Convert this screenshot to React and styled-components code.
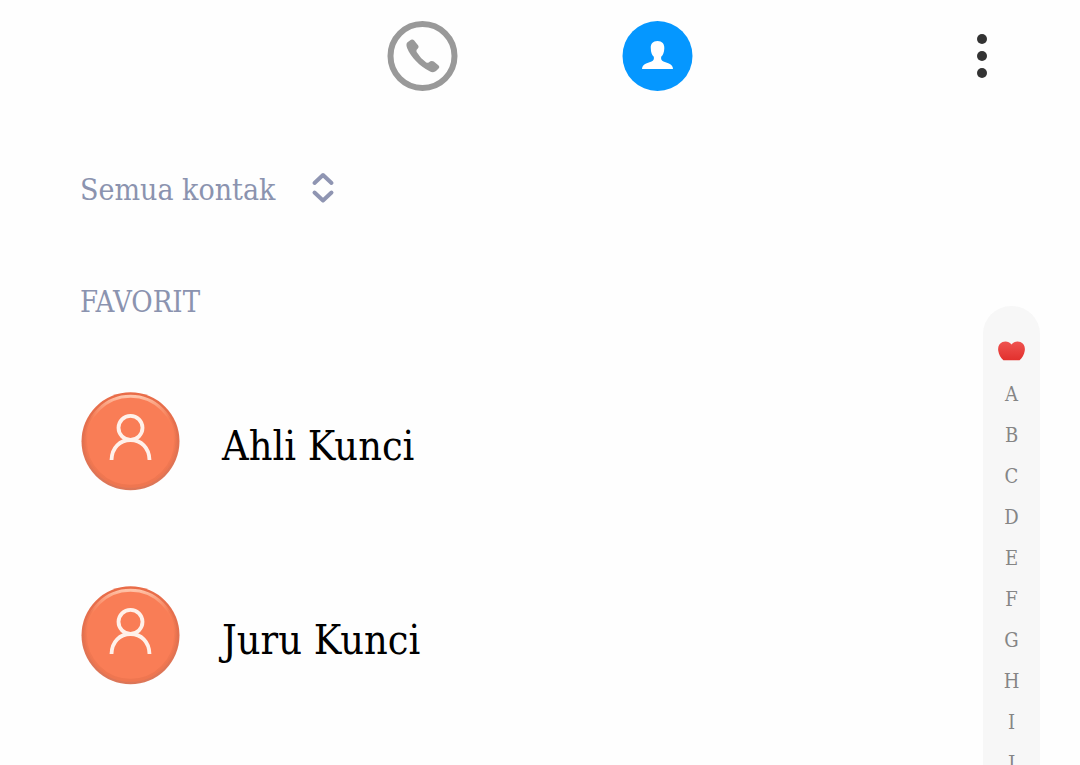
import React from 'react';
import styled, { createGlobalStyle } from 'styled-components';

const GlobalStyle = createGlobalStyle`
  * {
    box-sizing: border-box;
  }
  body {
    margin: 0;
    background: #fefefe;
    font-family: 'DejaVu Serif Condensed', 'DejaVu Serif', serif;
  }
  button {
    padding: 0;
    border: none;
    background: none;
    font-family: inherit;
    color: inherit;
    cursor: pointer;
  }
  svg {
    display: block;
  }
`;

const Page = styled.div`
  display: flex;
  flex-direction: column;
  height: 100vh;
  overflow: hidden;
`;

const Header = styled.header`
  display: grid;
  grid-template-columns: 1fr auto 1fr;
  align-items: center;
  flex: none;
  padding: 20px 80px;
`;

const Tabs = styled.nav`
  display: flex;
  grid-column: 2;
  gap: 163px;
`;

const MoreButton = styled.button`
  justify-self: end;
`;

const Body = styled.main`
  display: flex;
  flex: 1;
  min-height: 0;
  padding: 0 40px 0 80px;
`;

const Content = styled.div`
  flex: 1;
  padding-top: 56px;
`;

const Filter = styled.button`
  display: flex;
  align-items: center;
  gap: 36px;
  height: 40px;
  color: #8b93af;
  font-size: 30px;
  line-height: 36px;
`;

const FilterLabel = styled.span`
  padding-top: 4px;
`;

const SectionTitle = styled.h2`
  margin: 74px 0 0;
  color: #8b93af;
  font-size: 29px;
  font-weight: 400;
  line-height: 40px;
`;

const ContactList = styled.ul`
  display: flex;
  flex-direction: column;
  gap: 94px;
  margin: 69px 0 0;
  padding: 0;
  list-style: none;
`;

const Contact = styled.a`
  display: flex;
  align-items: center;
  gap: 42px;
  color: #000;
  text-decoration: none;
`;

const Name = styled.span`
  padding-top: 10px;
  font-size: 41px;
  line-height: 48px;
`;

const IndexRail = styled.nav`
  display: flex;
  flex-direction: column;
  align-items: center;
  flex: none;
  align-self: flex-start;
  width: 57px;
  margin-top: 194px;
  padding: 24px 0;
  border-radius: 28px;
  background: #f7f7f7;
`;

const IndexLink = styled.a`
  display: flex;
  align-items: center;
  justify-content: center;
  width: 100%;
  height: 41px;
  padding-top: ${({ $icon }) => ($icon ? '0' : '4px')};
  color: #858585;
  font-size: 20px;
  text-decoration: none;
`;

const PhoneIcon = () => (
  <svg width="72" height="72" viewBox="0 0 72 72" aria-hidden="true">
    <circle cx="35.5" cy="36" r="32" fill="none" stroke="#999" strokeWidth="6" />
    <path
      d="M20.5 22.2 L24 19.8 Q25.8 19 27.2 20.6 L31.2 25.4 Q32.2 27 31 28.2 L29.7 29.8 Q29 31 29.8 32.2 Q33.7 38.7 39 42.3 Q40.2 43.2 41.7 42.5 Q44.3 40.2 46.8 41.5 L51.6 45.4 Q53 46.8 51.8 48.3 L49 51.1 Q46.2 53.3 42.2 51 C33 46.2 24 37.5 20.2 28.2 Q18.5 24.1 20.5 22.2Z"
      fill="#999"
    />
  </svg>
);

const ContactsIcon = () => (
  <svg width="72" height="72" viewBox="0 0 72 72" aria-hidden="true">
    <circle cx="35.5" cy="36" r="35" fill="#0597ff" />
    <path
      d="M35.5 21 C40.1 21 42.6 24 42.3 28.4 C42.1 32.2 41.3 34.6 39.2 36.8 Q38.5 40.2 41.5 41.5 L46.9 43.5 Q50.9 45.2 51 49 H20 Q20.1 45.2 24.1 43.5 L29.5 41.5 Q32.5 40.2 31.8 36.8 C29.7 34.6 28.9 32.2 28.8 28.4 C28.4 24 30.9 21 35.5 21Z"
      fill="#fff"
    />
  </svg>
);

const MoreIcon = () => (
  <svg width="36" height="48" viewBox="0 0 36 48" fill="#333" aria-hidden="true">
    <circle cx="18" cy="7" r="5" />
    <circle cx="18" cy="24" r="5" />
    <circle cx="18" cy="41" r="5" />
  </svg>
);

const SortIcon = () => (
  <svg
    width="24"
    height="32"
    viewBox="0 0 24 32"
    fill="none"
    stroke="#8f95b2"
    strokeWidth="4"
    strokeLinecap="round"
    strokeLinejoin="round"
    aria-hidden="true"
  >
    <path d="M3.5 11 L12 3 L20.5 11" />
    <path d="M3.5 20.5 L12 28.5 L20.5 20.5" />
  </svg>
);

const Avatar = ({ id }) => (
  <svg width="100" height="100" viewBox="0 0 100 100" aria-hidden="true">
    <defs>
      <linearGradient id={`${id}-rim`} x1="0" y1="0" x2="0" y2="1">
        <stop offset="0" stopColor="#e96c48" />
        <stop offset="1" stopColor="#dc7658" />
      </linearGradient>
      <linearGradient id={`${id}-shine`} x1="0" y1="0" x2="0" y2="1">
        <stop offset="0" stopColor="#ffc3a8" />
        <stop offset="0.25" stopColor="#fa8259" stopOpacity="0.5" />
        <stop offset="0.5" stopColor="#ef7650" stopOpacity="0.6" />
        <stop offset="1" stopColor="#ef7650" />
      </linearGradient>
    </defs>
    <circle cx="50.5" cy="50.3" r="49" fill={`url(#${id}-rim)`} />
    <circle cx="50.5" cy="50.3" r="45" fill="#f97d56" stroke={`url(#${id}-shine)`} strokeWidth="3" />
    <g fill="none" stroke="#fff1ea" strokeWidth="3.8">
      <circle cx="50.5" cy="36.8" r="12" />
      <path d="M31.5 69 C31.8 56.5 40 49 50.5 49 S69.2 56.5 69.5 69" />
    </g>
  </svg>
);

const HeartIcon = () => (
  <svg width="28" height="20" viewBox="0 0 28 20" aria-hidden="true">
    <defs>
      <linearGradient id="heart" x1="0" y1="0" x2="0" y2="1">
        <stop offset="0" stopColor="#ef5350" />
        <stop offset="1" stopColor="#e2302d" />
      </linearGradient>
    </defs>
    <path
      d="M13.5 3.6 C15.5 0.4 19.5 0 22.5 1 C26 2.4 27.4 6.2 26.7 10 C26.2 13.4 24.4 16.6 21.6 19.3 H5.4 C2.6 16.6 0.8 13.4 0.3 10 C-0.4 6.2 1 2.4 4.5 1 C7.5 0 11.5 0.4 13.5 3.6Z"
      fill="url(#heart)"
    />
  </svg>
);

const contacts = [
  { id: 'ahli', name: 'Ahli Kunci' },
  { id: 'juru', name: 'Juru Kunci' },
];

const letters = 'ABCDEFGHIJ'.split('');

function App() {
  return (
    <Page>
      <GlobalStyle />
      <Header>
        <Tabs>
          <button type="button" aria-label="Telepon">
            <PhoneIcon />
          </button>
          <button type="button" aria-label="Kontak">
            <ContactsIcon />
          </button>
        </Tabs>
        <MoreButton type="button" aria-label="Menu">
          <MoreIcon />
        </MoreButton>
      </Header>
      <Body>
        <Content>
          <Filter type="button">
            <FilterLabel>Semua kontak</FilterLabel>
            <SortIcon />
          </Filter>
          <SectionTitle>FAVORIT</SectionTitle>
          <ContactList>
            {contacts.map(({ id, name }) => (
              <li key={id}>
                <Contact href={`#${id}`}>
                  <Avatar id={id} />
                  <Name>{name}</Name>
                </Contact>
              </li>
            ))}
          </ContactList>
        </Content>
        <IndexRail aria-label="Indeks">
          <IndexLink $icon href="#favorit" aria-label="Favorit">
            <HeartIcon />
          </IndexLink>
          {letters.map((letter) => (
            <IndexLink key={letter} href={`#${letter}`}>
              {letter}
            </IndexLink>
          ))}
        </IndexRail>
      </Body>
    </Page>
  );
}

export default App;
